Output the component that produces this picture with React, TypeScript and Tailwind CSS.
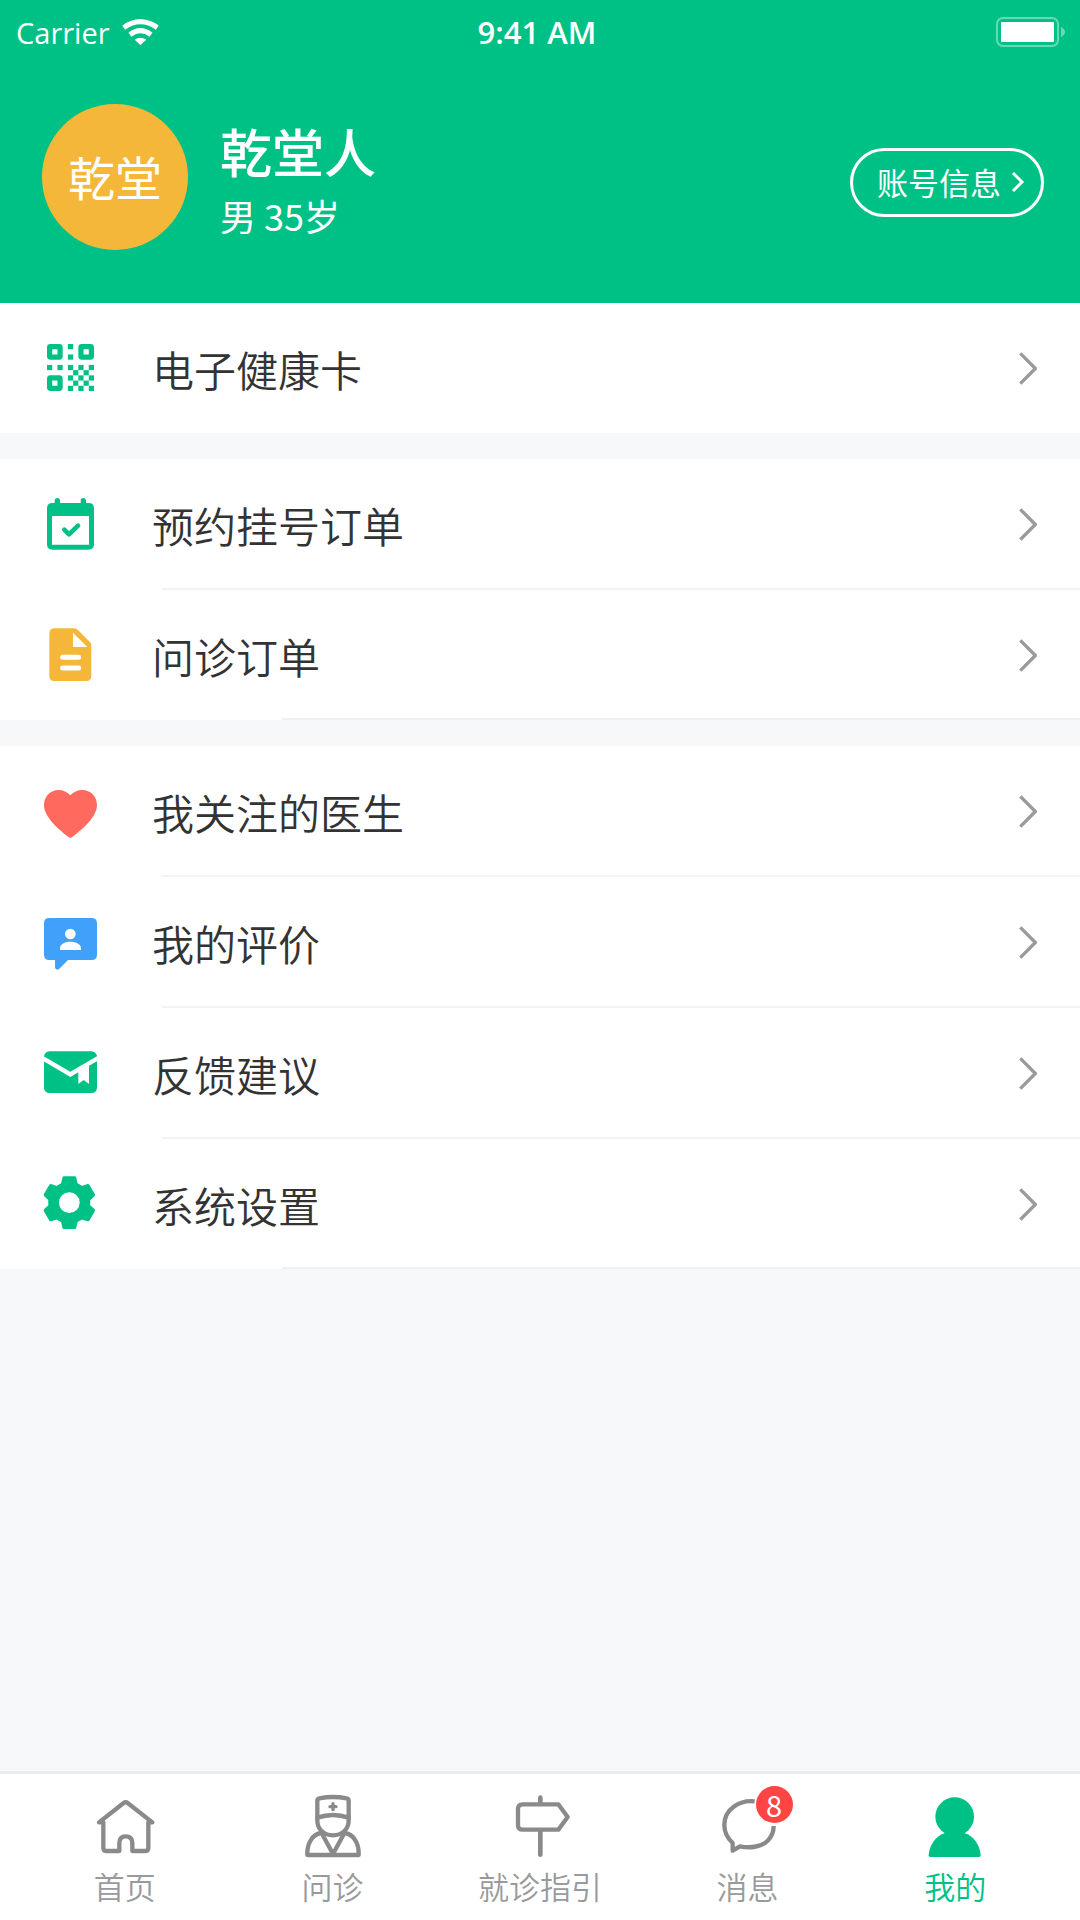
import type { ReactNode } from 'react';

const ROW_ICON = 'size-16 shrink-0';
const TAB_ICON = 'size-16';

function QrIcon() {
  const cells = [
    [4, 0], [4, 2], [0, 4], [2, 4],
    [4, 4], [6, 4], [8, 4],
    [5, 5], [7, 5],
    [4, 6], [6, 6], [8, 6],
    [5, 7], [7, 7],
    [4, 8], [6, 8], [8, 8],
  ];
  const finders = [[0, 0], [6, 0], [0, 6]];

  return (
    <svg viewBox="0 0 192 192" className={`${ROW_ICON} text-[#00c185]`} fill="currentColor" aria-hidden="true">
      <g transform="translate(27 24) scale(15.67)">
        {finders.map(([x, y]) => (
          <rect key={`${x}-${y}`} x={x + 0.5} y={y + 0.5} width="2" height="2" rx="0.15" fill="none" stroke="currentColor" strokeWidth="1" strokeLinejoin="round" />
        ))}
        {cells.map(([x, y]) => (
          <rect key={`${x}-${y}`} x={x} y={y} width="1" height="1" />
        ))}
      </g>
    </svg>
  );
}

function CalendarIcon() {
  return (
    <svg viewBox="0 0 192 192" className={`${ROW_ICON} text-[#00c185]`} fill="none" stroke="currentColor" strokeLinecap="round" strokeLinejoin="round" aria-hidden="true">
      <path fill="currentColor" stroke="none" fillRule="evenodd" d="M43 33H152Q168 33 168 49V157Q168 173 152 173H43Q27 173 27 157V49Q27 33 43 33ZM42 72V158H153V72Z" />
      <path strokeWidth="16" d="M58 26V40M136 26V40" />
      <path strokeWidth="14" d="M79 113L93 127L120 101" />
    </svg>
  );
}

function DocumentIcon() {
  return (
    <svg viewBox="0 0 192 192" className={`${ROW_ICON} text-[#f4b73a]`} aria-hidden="true">
      <path fill="currentColor" d="M50 16H108Q115 16 120 21L155 56Q160 61 160 68V158Q160 174 144 174H50Q34 174 34 158V32Q34 16 50 16Z" />
      <path fill="#fff" d="M105 29V72H148Z" />
      <path stroke="#fff" strokeWidth="15" strokeLinecap="round" d="M74 103H122M74 135H122" />
    </svg>
  );
}

function HeartIcon() {
  return (
    <svg viewBox="0 0 192 192" className={`${ROW_ICON} text-[#ff695e]`} fill="currentColor" aria-hidden="true">
      <path d="M97 49C87 39 76 33 62 33C37 33 18 53 18 78C18 112 58 148 90 173Q97 179 104 173C137 148 177 112 177 78C177 53 158 33 133 33C118 33 107 39 97 49Z" />
    </svg>
  );
}

function ReviewIcon() {
  return (
    <svg viewBox="0 0 192 192" className={`${ROW_ICON} text-[#41a1fa]`} aria-hidden="true">
      <path fill="currentColor" d="M34 24H161Q177 24 177 40V134Q177 150 161 150H90L64 176Q60 180 55 178Q51 176 51 171V150H34Q18 150 18 134V40Q18 24 34 24Z" />
      <circle cx="97" cy="72" r="16" fill="#fff" />
      <path fill="#fff" d="M66 115C66 102 80 95 97 95S129 102 129 115V120H66Z" />
    </svg>
  );
}

function FeedbackIcon() {
  return (
    <svg viewBox="0 0 192 192" className={`${ROW_ICON} text-[#00c185]`} aria-hidden="true">
      <rect x="18" y="31" width="159" height="125" rx="16" fill="currentColor" />
      <path fill="#fff" d="M12 43L97 92L182 43V58L153 74V129L137 117L121 129V94L97 108L12 58Z" />
    </svg>
  );
}

function GearIcon() {
  return (
    <svg viewBox="0 0 192 192" className={`${ROW_ICON} text-[#00c185]`} fill="currentColor" aria-hidden="true">
      <g transform="translate(94 92)">
        {[0, 60, 120, 180, 240, 300].map((angle) => (
          <path key={angle} transform={`rotate(${angle})`} d="M-21 -75Q-20 -79 -16 -79H16Q20 -79 21 -75L25 -57L36 -50H-36L-25 -57Z" />
        ))}
        <path fillRule="evenodd" d="M0 -63A63 63 0 1 1 0 63A63 63 0 1 1 0 -63ZM0 -31A31 31 0 1 0 0 31A31 31 0 1 0 0 -31Z" />
      </g>
    </svg>
  );
}

function TabSvg({ children }: { children: ReactNode }) {
  return (
    <svg viewBox="0 0 192 192" className={TAB_ICON} fill="none" stroke="#8a8a8a" strokeWidth="13" strokeLinecap="round" strokeLinejoin="round" aria-hidden="true">
      {children}
    </svg>
  );
}

const groups = [
  [{ label: '电子健康卡', icon: <QrIcon /> }],
  [
    { label: '预约挂号订单', icon: <CalendarIcon /> },
    { label: '问诊订单', icon: <DocumentIcon /> },
  ],
  [
    { label: '我关注的医生', icon: <HeartIcon /> },
    { label: '我的评价', icon: <ReviewIcon /> },
    { label: '反馈建议', icon: <FeedbackIcon /> },
    { label: '系统设置', icon: <GearIcon /> },
  ],
];

const tabs = [
  {
    label: '首页',
    icon: (
      <TabSvg>
        <path d="M18 85L92 27Q98 22 104 27L178 85H166V161Q166 171 156 171H118V147Q118 127 98 127Q79 127 79 147V171H41Q31 171 31 161V85Z" />
      </TabSvg>
    ),
  },
  {
    label: '问诊',
    icon: (
      <TabSvg>
        <path d="M52 20Q52 14 58 13Q99 5 140 13Q146 14 146 20V80C146 106 125 124 99 124S52 106 52 80Z" />
        <path d="M52 71Q99 55 146 71" />
        <path strokeWidth="10" d="M99 29V47M90 38H108" />
        <path d="M62 117C38 121 22 148 22 176V183H176V176C176 148 160 121 136 117" />
        <path d="M66 119L99 180L132 119" />
      </TabSvg>
    ),
  },
  {
    label: '就诊指引',
    icon: (
      <TabSvg>
        <path d="M44 31H151L179 69L151 107H44Q30 107 30 93V45Q30 31 44 31Z" />
        <path strokeWidth="14" d="M97 11V30M97 110V182" />
      </TabSvg>
    ),
  },
  {
    label: '消息',
    badge: 8,
    icon: (
      <TabSvg>
        <path strokeLinecap="butt" d="M116 22C72 17 25 45 25 93C25 118 36 134 50 147V170L72 157C100 163 135 160 155 140C168 127 173 112 173 96" />
      </TabSvg>
    ),
  },
  {
    label: '我的',
    active: true,
    icon: (
      <svg viewBox="0 0 192 192" className={TAB_ICON} fill="#00c185" aria-hidden="true">
        <circle cx="95" cy="68" r="58" />
        <path d="M17 184C19 151 40 125 66 117H124C150 125 171 151 173 184Q173 189 168 189H22Q17 189 17 184Z" />
      </svg>
    ),
  },
];

function StatusBar() {
  return (
    <div className="grid h-16 grid-cols-3 items-center pr-3.5 pl-4 font-['Open_Sans',sans-serif] leading-none">
      <div className="flex items-center gap-3">
        <span className="text-[29px]">Carrier</span>
        <svg viewBox="0 0 111 78" className="h-[26px] w-[37px]" fill="none" stroke="#fff" aria-label="Wi-Fi">
          <path strokeWidth="15" d="M5 26Q55 -10 106 26" />
          <path strokeWidth="15" d="M24 47Q55 23 87 47" />
          <path fill="#fff" stroke="none" d="M38 62Q55 50 73 62L55 78Z" />
        </svg>
      </div>
      <span className="pr-2 text-center text-[31px] font-semibold">9:41 AM</span>
      <svg viewBox="0 0 70 30" className="h-[30px] w-[70px] justify-self-end" aria-label="Battery">
        <rect x="1" y="1" width="61" height="28" rx="6" fill="none" stroke="#fff" strokeOpacity="0.4" strokeWidth="2" />
        <rect x="5" y="5" width="53" height="20" rx="1" fill="#fff" />
        <path d="M65 10Q69 12 69 15T65 20Z" fill="#fff" fillOpacity="0.4" />
      </svg>
    </div>
  );
}

export default function App() {
  return (
    <div className="flex min-h-screen flex-col bg-[#f7f8fa] font-['Noto_Sans_CJK_SC',sans-serif] text-[#333333]">
      <header className="bg-[#00c185] text-white">
        <StatusBar />
        <div className="flex items-center pt-10 pr-9 pb-[53px] pl-[42px]">
          <div className="flex size-[146px] shrink-0 items-center justify-center rounded-full bg-[#f4b73a] pb-0.5 text-[47px]">
            乾堂
          </div>
          <div className="ml-8 flex-1 pt-1">
            <h1 className="text-[52px] leading-[72px] font-medium">乾堂人</h1>
            <p className="text-[36px] leading-[56px]">男 35岁</p>
          </div>
          <button type="button" className="mt-2.5 flex h-[69px] items-center gap-2.5 rounded-full border-[3px] border-white pr-4 pl-6 text-[31px] leading-none">
            <span className="pb-0.5">账号信息</span>
            <svg viewBox="0 0 14 22" className="h-[22px] w-[14px]" fill="none" stroke="#fff" strokeWidth="3" aria-hidden="true">
              <path d="M2 2L11 11L2 20" />
            </svg>
          </button>
        </div>
      </header>

      <main className="flex flex-1 flex-col gap-[26px]">
        {groups.map((rows, groupIndex) => (
          <ul key={groupIndex} className="bg-white">
            {rows.map((row, index) => (
              <li key={row.label}>
                <a href="#" className="flex h-[130px] items-center pr-[43px] pl-[38px]">
                  {row.icon}
                  <span className="ml-[50px] flex-1 text-[42px] font-[350]">{row.label}</span>
                  <svg viewBox="0 0 54 99" className="h-[33px] w-[18px]" fill="none" stroke="#999a9b" strokeWidth="10" aria-hidden="true">
                    <path d="M4 4L49 49.500L4 95" />
                  </svg>
                </a>
                {index < rows.length - 1 && <div className="-mt-px ml-[162px] h-0.5 bg-[#f2f3f4]" />}
                {index > 0 && index === rows.length - 1 && <div className="-mt-0.5 ml-[282px] h-0.5 bg-[#eff0f3]" />}
              </li>
            ))}
          </ul>
        ))}
      </main>

      <nav className="border-t-[3px] border-[#ececed] bg-white">
        <ul className="flex px-[21px] pt-5 pb-3.5">
          {tabs.map((tab) => (
            <li key={tab.label} className="flex-1">
              <a href="#" className={`flex flex-col items-center gap-2 ${tab.active ? 'text-[#00c185]' : 'text-[#999a9b]'}`}>
                <span className="relative">
                  {tab.icon}
                  {tab.badge && (
                    <span className="absolute -top-2 left-10 flex size-[37px] items-center justify-center rounded-full bg-[#ff4444] text-[29px] leading-none text-white">
                      {tab.badge}
                    </span>
                  )}
                </span>
                <span className="text-[31px] leading-10 font-[350]">{tab.label}</span>
              </a>
            </li>
          ))}
        </ul>
      </nav>
    </div>
  );
}
